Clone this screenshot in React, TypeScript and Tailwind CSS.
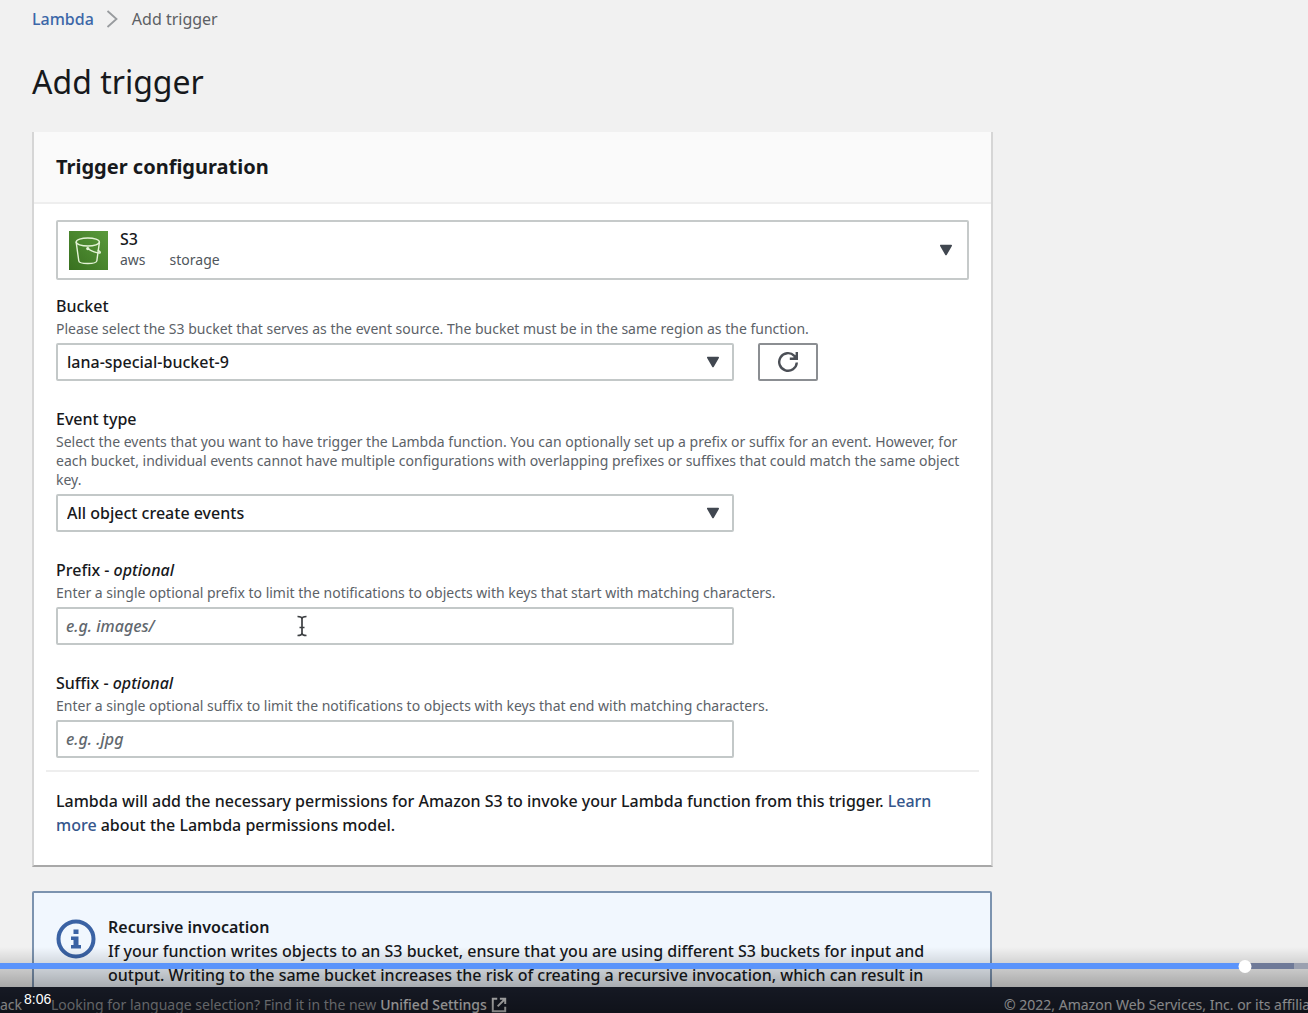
import type { ReactNode } from "react";

const PLAYED = 95.2;
const BUFFERED = 98.9;

function Caret() {
  return (
    <svg viewBox="0 0 14 12" className="h-3 w-3.5 shrink-0" aria-hidden="true">
      <path d="M1.8 1.5h10.4L7 10.5z" fill="#414750" stroke="#414750" strokeWidth="1.6" strokeLinejoin="round" />
    </svg>
  );
}

function BucketIcon() {
  return (
    <svg viewBox="0 0 39 39" className="size-[39px] shrink-0" fill="none" aria-hidden="true">
      <defs>
        <linearGradient id="s3" x1="0" y1="1" x2="1" y2="0">
          <stop offset="0" stopColor="#38701f" />
          <stop offset="1" stopColor="#5a9a3c" />
        </linearGradient>
      </defs>
      <rect width="39" height="39" fill="url(#s3)" />
      <g stroke="#e4f3d6" strokeWidth="1.4" strokeLinecap="round" strokeLinejoin="round">
        <ellipse cx="18.8" cy="11" rx="11.600" ry="4" />
        <path d="M7.2 11.300 9.800 30c.5 3.400 17.400 3.400 18 0L30.400 11.300" />
        <path d="M19 17.800c3.500 2 8 3.900 11.300 4.200 1.800 0 1-1.600-1.100-2.600" />
        <circle cx="18.800" cy="17.600" r="1" fill="#e4f3d6" />
      </g>
    </svg>
  );
}

function Field({ id, label, optional, hint, children }: { id: string; label: string; optional?: boolean; hint: string; children: ReactNode }) {
  return (
    <div>
      <label htmlFor={id} className="mb-px block leading-6 font-medium">
        {label}
        {optional && <> - <em>optional</em></>}
      </label>
      <p id={id + "-hint"} className="mb-[5px] text-sm leading-[19px] text-[#5c6268]">{hint}</p>
      {children}
    </div>
  );
}

function SelectBox({ id, value }: { id: string; value: string }) {
  return (
    <div className="relative w-full max-w-[678px]">
      <select
        id={id}
        aria-describedby={id + "-hint"}
        className="block h-[38px] w-full appearance-none rounded-xs border-2 border-[#c3c8c8] bg-white px-[9px] font-medium"
      >
        <option>{value}</option>
      </select>
      <span className="pointer-events-none absolute inset-y-0 right-3.5 flex items-center">
        <Caret />
      </span>
    </div>
  );
}

function TextBox({ id, placeholder }: { id: string; placeholder: string }) {
  return (
    <input
      id={id}
      type="text"
      aria-describedby={id + "-hint"}
      placeholder={placeholder}
      className="block h-[38px] w-full max-w-[678px] rounded-xs border-2 border-[#c3c8c8] bg-white px-2 placeholder:font-medium placeholder:text-[#62686e] placeholder:italic"
    />
  );
}

function TextCursor() {
  return (
    <svg viewBox="0 0 12 22" className="pointer-events-none absolute top-2 left-60 h-[22px] w-3" fill="none" stroke="#3c3f42" strokeWidth="1.7" aria-hidden="true">
      <path d="M1.5 1.500C4 1.500 6 2 6 4v14c0 2-2 2.500-4.500 2.500M10.500 1.500C8 1.500 6 2 6 4M6 18c0 2 2 2.500 4.500 2.500M3.500 12.500h5" />
    </svg>
  );
}

function PlayerControls() {
  return (
    <div className="pointer-events-none absolute inset-x-0 bottom-0 h-[66px] bg-linear-to-b from-transparent to-black/50">
      <div className="relative mt-4 h-1.5 bg-[#9ba1b0]">
        <div className="absolute inset-y-0 left-0 bg-[#6f7a98]" style={{ width: `${BUFFERED}%` }} />
        <div className="absolute inset-y-0 left-0 bg-[#5b94fb]" style={{ width: `${PLAYED}%` }} />
        <div className="absolute -top-[3px] size-[13px] -translate-x-1/2 rounded-full bg-white" style={{ left: `${PLAYED}%` }} />
        <input type="range" min={0} max={100} step={0.1} defaultValue={PLAYED} aria-label="Seek" className="pointer-events-auto absolute inset-0 h-full w-full opacity-0" />
      </div>
      <time className="absolute bottom-1.5 left-6 font-['Liberation_Sans'] text-sm leading-4 text-white">8:06</time>
    </div>
  );
}

export default function App() {
  return (
    <div className="relative flex h-screen flex-col overflow-hidden bg-[#f1f1f1] font-['Noto_Sans',sans-serif] text-base text-[#17191c]">
      <main className="min-h-0 flex-1 overflow-hidden px-8 pt-[7px]">
        <nav aria-label="Breadcrumb" className="flex items-center leading-6">
          <a href="#lambda" className="font-medium text-[#3c67a8]">Lambda</a>
          <svg viewBox="0 0 12 18" className="mr-3.5 ml-3 h-[18px] w-3" fill="none" stroke="#989b9e" strokeWidth="1.8" aria-hidden="true">
            <path d="m1.500 1 9 8-9 8" />
          </svg>
          <span className="text-[#5c6064]">Add trigger</span>
        </nav>
        <h1 className="mt-[30px] text-[32px] leading-[42px]">Add trigger</h1>

        <section className="mt-[29px] max-w-[961px] border-r-2 border-b-2 border-l-2 border-[#d6d6d6] border-b-[#a8a8a8] bg-white">
          <header className="border-b-2 border-[#eeeeee] bg-[#fafafa] px-[22px] py-5">
            <h2 className="text-xl leading-[30px] font-bold">Trigger configuration</h2>
          </header>
          <form className="px-[22px] pt-4 pb-7" onSubmit={(e) => e.preventDefault()}>
            <button type="button" aria-haspopup="listbox" aria-label="S3, aws storage" className="flex h-[60px] w-full items-center rounded-xs border-2 border-[#c6caca] pr-3.5 pl-[11px] text-left">
              <BucketIcon />
              <span className="mb-0.5 ml-3 flex-1">
                <span className="block leading-[22px] font-medium">S3</span>
                <span className="flex gap-6 text-sm leading-5 text-[#50565c]">
                  <span>aws</span>
                  <span>storage</span>
                </span>
              </span>
              <Caret />
            </button>

            <div className="mt-3.5 flex flex-col gap-[26px]">
              <Field id="bucket" label="Bucket" hint="Please select the S3 bucket that serves as the event source. The bucket must be in the same region as the function.">
                <div className="flex gap-6">
                  <SelectBox id="bucket" value="lana-special-bucket-9" />
                  <button type="button" aria-label="Refresh buckets" className="flex h-[38px] w-[60px] shrink-0 items-center justify-center rounded-xs border-2 border-[#8b8e92]">
                    <svg viewBox="0 0 22 22" className="size-[22px]" fill="none" stroke="#4b4f56" strokeWidth="2.4" aria-hidden="true">
                      <path d="M19.800 11.500A8.800 8.800 0 1 1 17.300 4.800l2 2.200" />
                      <path d="M19.800 1v6.800h-7" />
                      <path d="M15.500 7.500 19.800 3v4.500z" fill="#4b4f56" stroke="none" />
                    </svg>
                  </button>
                </div>
              </Field>
              <Field id="event" label="Event type" hint="Select the events that you want to have trigger the Lambda function. You can optionally set up a prefix or suffix for an event. However, for each bucket, individual events cannot have multiple configurations with overlapping prefixes or suffixes that could match the same object key.">
                <SelectBox id="event" value="All object create events" />
              </Field>
              <Field id="prefix" label="Prefix" optional hint="Enter a single optional prefix to limit the notifications to objects with keys that start with matching characters.">
                <div className="relative">
                  <TextBox id="prefix" placeholder="e.g. images/" />
                  <TextCursor />
                </div>
              </Field>
              <Field id="suffix" label="Suffix" optional hint="Enter a single optional suffix to limit the notifications to objects with keys that end with matching characters.">
                <TextBox id="suffix" placeholder="e.g. .jpg" />
              </Field>
            </div>

            <hr className="-mx-2.5 mt-3 mb-[17px] border-t-2 border-[#eeeeee]" />
            <p className="leading-6 font-medium">
              Lambda will add the necessary permissions for Amazon S3 to invoke your Lambda function from this trigger.{" "}
              <a href="#learn-more" className="text-[#34568c]">Learn more</a> about the Lambda permissions model.
            </p>
          </form>
        </section>

        <aside className="mt-6 flex max-w-[960px] gap-3 rounded-xs border-2 border-[#7c93af] bg-[#f1f7fe] px-[22px] pt-[22px] pb-6">
          <svg viewBox="0 0 40 40" className="mt-1 size-10 shrink-0" aria-hidden="true">
            <circle cx="20" cy="20" r="17.5" fill="none" stroke="#3a62a4" strokeWidth="4" />
            <path d="M17.500 10.500h5v4.500h-5zM15 17.500h7.500v8.500H25v3.500H15V26h2.500v-5H15z" fill="#3a62a4" />
          </svg>
          <div className="leading-6">
            <h3 className="font-semibold">Recursive invocation</h3>
            <p className="font-medium">
              If your function writes objects to an S3 bucket, ensure that you are using different S3 buckets for input and output. Writing to the same bucket increases the risk of creating a recursive invocation, which can result in
            </p>
          </div>
        </aside>
      </main>

      <footer className="flex h-[26px] shrink-0 items-start justify-between overflow-hidden bg-[#1f2433] pt-2 text-sm leading-5 whitespace-nowrap text-[#b0b3b8]">
        <div className="flex">
          <a href="#feedback" className="w-[51px] text-[#e6e8ea]">ack</a>
          <p className="flex items-center gap-1">
            Looking for language selection? Find it in the new
            <a href="#settings" className="flex items-center gap-1 font-medium text-white">
              Unified Settings
              <svg viewBox="0 0 18 18" className="size-4" fill="none" stroke="currentColor" strokeWidth="2.2" aria-hidden="true">
                <path d="M7 2H2v14h14v-5M10 2h6v6M16 2 7.500 10.500" />
              </svg>
            </a>
          </p>
        </div>
        <p className="w-[304px] overflow-hidden text-[#eeeff1]">© 2022, Amazon Web Services, Inc. or its affiliates.</p>
      </footer>
      <PlayerControls />
    </div>
  );
}
